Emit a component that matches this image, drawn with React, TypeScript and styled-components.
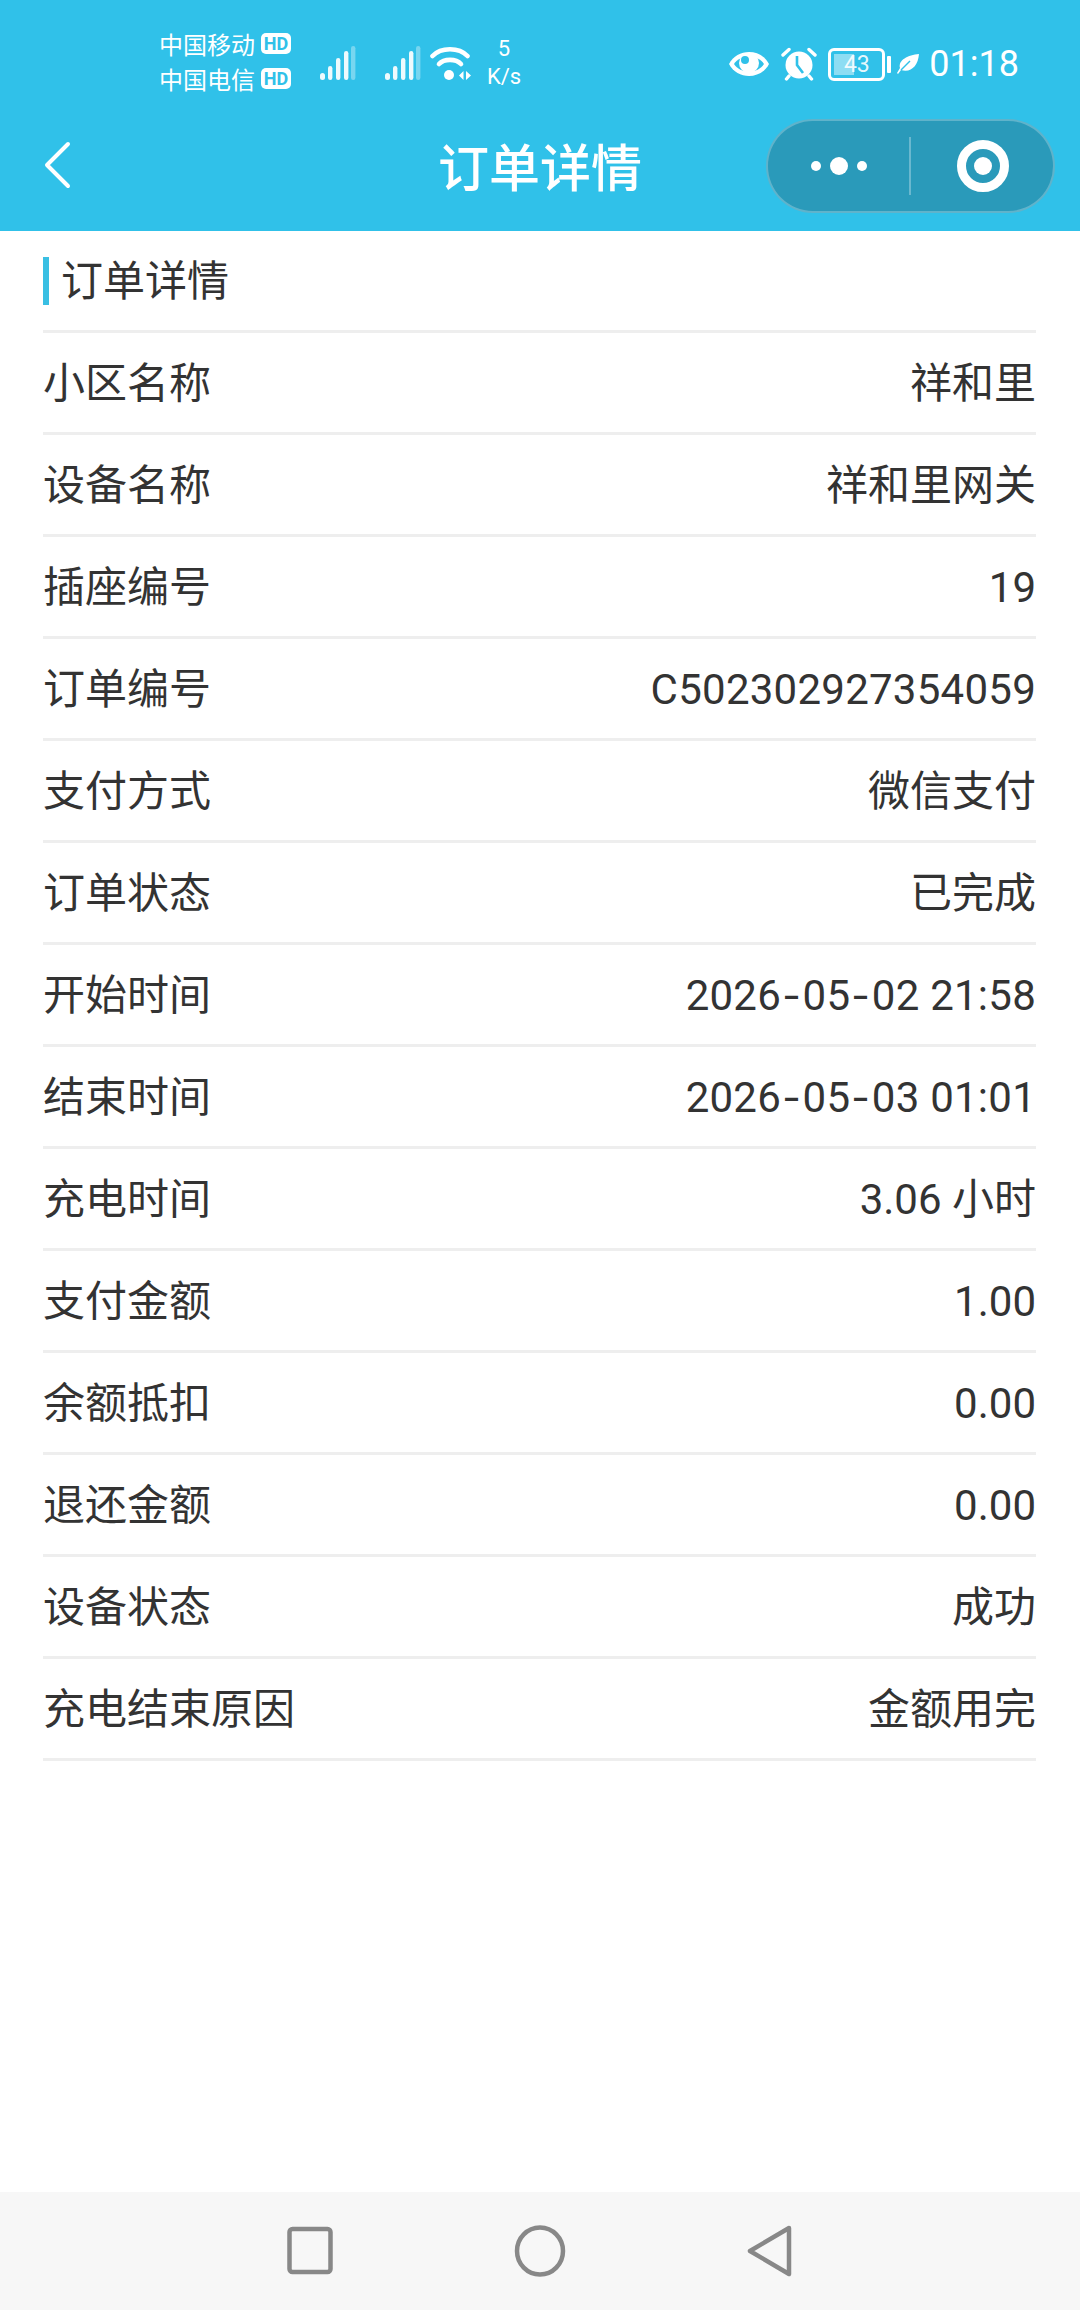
import React from 'react'
import styled, { createGlobalStyle } from 'styled-components'

const rows: [string, string][] = [
  ['小区名称', '祥和里'],
  ['设备名称', '祥和里网关'],
  ['插座编号', '19'],
  ['订单编号', 'C502302927354059'],
  ['支付方式', '微信支付'],
  ['订单状态', '已完成'],
  ['开始时间', '2026-05-02 21:58'],
  ['结束时间', '2026-05-03 01:01'],
  ['充电时间', '3.06 小时'],
  ['支付金额', '1.00'],
  ['余额抵扣', '0.00'],
  ['退还金额', '0.00'],
  ['设备状态', '成功'],
  ['充电结束原因', '金额用完'],
]

const SignalIcon = () => (
  <svg width='36' height='36' viewBox='0 0 36 36'>
    <g fill='#fff' opacity='0.92'>
      <rect x='0' y='27' width='5' height='7' rx='2.5' />
      <rect x='8' y='20' width='4.4' height='14' rx='2.2' />
      <rect x='16' y='12' width='4.4' height='22' rx='2.2' />
      <rect x='24' y='5' width='4.4' height='29' rx='2.2' />
    </g>
    <rect x='31' y='0' width='4.4' height='34' rx='2.2' fill='#fff' opacity='0.35' />
  </svg>
)

const WifiIcon = () => (
  <svg width='42' height='36' viewBox='0 0 42 36'>
    <g fill='none' stroke='#fff' strokeWidth='4.6' strokeLinecap='round'>
      <path d='M2.5 10 C11 1 29 1 37.5 10' />
      <path d='M9 18 C14 12.5 26 12.5 31 18' />
    </g>
    <circle cx='19' cy='29' r='5' fill='#fff' />
    <path d='M29 29.5 L33.5 25 V34 Z M36 25 L41 29.5 L36 34 Z' fill='#fff' />
  </svg>
)

const EyeIcon = () => (
  <svg width='42' height='26' viewBox='0 0 42 26'>
    <path d='M1 13 C9 -3 33 -3 41 13 C33 29 9 29 1 13 Z' fill='#fff' />
    <path d='M6 13 C12 3 30 3 36 13 C30 23 12 23 6 13 Z' fill='#30c1e9' />
    <circle cx='21' cy='12' r='10' fill='#fff' />
    <circle cx='17' cy='9' r='4' fill='#30c1e9' />
  </svg>
)

const AlarmIcon = () => (
  <svg width='38' height='34' viewBox='0 0 38 34'>
    <circle cx='19' cy='18' r='13.5' fill='#fff' />
    <path d='M3 8 L9 2.5 M35 8 L29 2.5 M9 29 L6.5 32 M29 29 L31.5 32' stroke='#fff' strokeWidth='3.4' strokeLinecap='round' />
    <path d='M17 9 V18 L23 26' fill='none' stroke='#30c1e9' strokeWidth='2.6' />
  </svg>
)

const LeafIcon = () => (
  <svg width='23' height='22' viewBox='0 0 23 22'>
    <path d='M22 1 C21 13 14 20 4 17 L1 21 L0 20 L3 15 C1 7 11 2 22 1 Z' fill='#fff' />
    <path d='M4 17 L13 8' stroke='#30c1e9' strokeWidth='1.4' />
  </svg>
)

const BackIcon = () => (
  <svg width='28' height='48' viewBox='0 0 28 48'>
    <path d='M24 3 L3 24 L24 45' fill='none' stroke='#fff' strokeWidth='4' strokeLinecap='round' strokeLinejoin='round' />
  </svg>
)

// the hyphens in the dates are drawn wider than the font's own
const renderValue = (value: string) => {
  if (!/^\d{4}-/.test(value)) return value
  return value.split('-').map((part, i) => (
    <React.Fragment key={i}>
      {i > 0 && <Dash>-</Dash>}
      {part}
    </React.Fragment>
  ))
}

const App: React.FC = () => {
  return (
    <Page>
      <GlobalStyle />
      <TopArea>
        <StatusBar>
          <Carriers>
            <Carrier>中国移动<HdBadge>HD</HdBadge></Carrier>
            <Carrier>中国电信<HdBadge>HD</HdBadge></Carrier>
          </Carriers>
          <SignalGroup>
            <SignalIcon />
            <SignalIcon />
          </SignalGroup>
          <WifiIcon />
          <Speed>
            <span>5</span>
            <span>K/s</span>
          </Speed>
          <StatusRight>
            <EyeIcon />
            <AlarmIcon />
            <Battery>
              <BatteryBody>
                <BatteryFill />
                <BatteryLevel>43</BatteryLevel>
              </BatteryBody>
              <BatteryTip />
            </Battery>
            <LeafIcon />
            <Clock>01:18</Clock>
          </StatusRight>
        </StatusBar>
        <NavBar>
          <BackButton>
            <BackIcon />
          </BackButton>
          <NavTitle>订单详情</NavTitle>
          <Capsule>
            <CapsuleDots>
              <Dot size={10} />
              <Dot size={18} />
              <Dot size={10} />
            </CapsuleDots>
            <CapsuleDivider />
            <CapsuleTarget>
              <TargetRing />
            </CapsuleTarget>
          </Capsule>
        </NavBar>
      </TopArea>

      <Content>
        <SectionTitle>
          <TitleMark />
          <span>订单详情</span>
        </SectionTitle>
        {rows.map(([label, value]) => (
          <Row key={label}>
            <span>{label}</span>
            <Value wide={value.length > 10}>{renderValue(value)}</Value>
          </Row>
        ))}
      </Content>

      <BottomNav>
        <svg width='46' height='50' viewBox='0 0 46 50'>
          <rect x='2.5' y='3' width='41' height='43' rx='3' fill='none' stroke='#888' strokeWidth='4.5' />
        </svg>
        <svg width='52' height='52' viewBox='0 0 52 52'>
          <ellipse cx='26' cy='26' rx='23' ry='23.5' fill='none' stroke='#888' strokeWidth='4.5' />
        </svg>
        <svg width='46' height='52' viewBox='0 0 46 52'>
          <path d='M42 3 L3 26 L42 49 Z' fill='none' stroke='#888' strokeWidth='4.5' strokeLinejoin='round' />
        </svg>
      </BottomNav>
    </Page>
  )
}

const GlobalStyle = createGlobalStyle`
  html, body {
    margin: 0;
    padding: 0;
    background: #fff;
  }
`

const Page = styled.div`
  width: 1080px;
  height: 2310px;
  display: flex;
  flex-direction: column;
  background: #fff;
  font-family: 'Roboto', 'Noto Sans CJK SC', sans-serif;
  overflow: hidden;
`

const TopArea = styled.header`
  background: #30c1e9;
  height: 231px;
  flex-shrink: 0;
  color: #fff;
`

const StatusBar = styled.div`
  height: 98px;
  padding: 30px 24px 0 159px;
  box-sizing: border-box;
  display: flex;
  align-items: center;
`

const Carriers = styled.div`
  display: flex;
  flex-direction: column;
  gap: 10px;
  width: 161px;
  margin-top: -6px;
`

const Carrier = styled.div`
  display: flex;
  align-items: center;
  gap: 6px;
  font-size: 24px;
  line-height: 25px;
  font-family: 'Noto Sans CJK SC', sans-serif;
`

const HdBadge = styled.span`
  display: inline-flex;
  align-items: center;
  justify-content: center;
  width: 30px;
  height: 21px;
  background: #fff;
  border-radius: 5px;
  color: #30c1e9;
  font-size: 18px;
  font-weight: 700;
  font-family: 'Roboto', sans-serif;
`

const SignalGroup = styled.div`
  display: flex;
  gap: 29px;
  margin-right: 9px;
`

const Speed = styled.div`
  display: flex;
  flex-direction: column;
  align-items: center;
  width: 38px;
  margin-left: 13px;
  margin-top: -2px;
  font-size: 22px;
  line-height: 28px;
`

const StatusRight = styled.div`
  margin-left: auto;
  display: flex;
  align-items: center;
  gap: 10px;
`

const Battery = styled.div`
  display: flex;
  align-items: center;
  gap: 2px;
  margin-right: -4px;
`

const BatteryBody = styled.div`
  position: relative;
  width: 57px;
  height: 33px;
  box-sizing: border-box;
  border: 3px solid #fff;
  border-radius: 6px;
  display: flex;
  align-items: center;
  justify-content: center;
`

const BatteryFill = styled.div`
  position: absolute;
  left: 3px;
  top: 3px;
  bottom: 3px;
  width: 20px;
  background: rgba(255, 255, 255, 0.45);
`

const BatteryLevel = styled.span`
  position: relative;
  font-size: 23px;
  color: rgba(255, 255, 255, 0.9);
`

const BatteryTip = styled.div`
  width: 4px;
  height: 17px;
  background: #fff;
  border-radius: 1px;
`

const Clock = styled.span`
  font-size: 36px;
  line-height: 40px;
  margin-left: -1px;
  margin-right: 37px;
`

const NavBar = styled.div`
  position: relative;
  height: 133px;
  display: flex;
  align-items: center;
  justify-content: center;
`

const BackButton = styled.div`
  position: absolute;
  left: 44px;
  top: 43px;
  line-height: 0;
`

const NavTitle = styled.h1`
  margin: 0;
  font-size: 51px;
  font-weight: 500;
  font-family: 'Noto Sans CJK SC', sans-serif;
  color: #fff;
`

const Capsule = styled.div`
  position: absolute;
  left: 766px;
  top: 21px;
  width: 289px;
  height: 94px;
  box-sizing: border-box;
  background: #2a9aba;
  border: 2px solid rgba(255, 255, 255, 0.25);
  border-radius: 47px;
  display: flex;
  align-items: center;
`

const CapsuleDots = styled.div`
  width: 141px;
  display: flex;
  align-items: center;
  justify-content: center;
  gap: 9px;
`

const Dot = styled.span<{ size: number }>`
  width: ${(props) => props.size}px;
  height: ${(props) => props.size}px;
  border-radius: 50%;
  background: #fff;
`

const CapsuleDivider = styled.div`
  width: 2px;
  height: 58px;
  background: rgba(255, 255, 255, 0.3);
`

const CapsuleTarget = styled.div`
  flex: 1;
  display: flex;
  align-items: center;
  justify-content: center;
  padding-left: 2px;
`

const TargetRing = styled.div`
  width: 52px;
  height: 52px;
  box-sizing: border-box;
  border: 9px solid #fff;
  border-radius: 50%;
  display: flex;
  align-items: center;
  justify-content: center;

  &::after {
    content: '';
    width: 18px;
    height: 18px;
    border-radius: 50%;
    background: #fff;
  }
`

const Content = styled.main`
  flex: 1;
  padding: 0 44px 0 43px;
`

const SectionTitle = styled.div`
  height: 102px;
  box-sizing: border-box;
  border-bottom: 3px solid #eee;
  display: flex;
  align-items: center;
  gap: 12px;
  font-size: 42px;
  line-height: 56px;
  color: #333;

  span {
    padding-top: 2px;
  }
`

const TitleMark = styled.i`
  width: 6px;
  height: 48px;
  background: #39bfe3;
`

const Row = styled.div`
  height: 102px;
  box-sizing: border-box;
  border-bottom: 3px solid #eee;
  padding-top: 3px;
  display: flex;
  align-items: center;
  justify-content: space-between;
  font-size: 42px;
  line-height: 56px;
  color: #333;
`

const Value = styled.span<{ wide: boolean }>`
  letter-spacing: ${(props) => (props.wide ? '0.25px' : '0')};
`

const Dash = styled.span`
  display: inline-block;
  width: 21.5px;
  text-align: center;
  transform: scaleX(1.3);
`

const BottomNav = styled.nav`
  height: 118px;
  flex-shrink: 0;
  background: #f7f7f7;
  display: flex;
  align-items: center;
  justify-content: center;
  gap: 181px;
`

export default App
